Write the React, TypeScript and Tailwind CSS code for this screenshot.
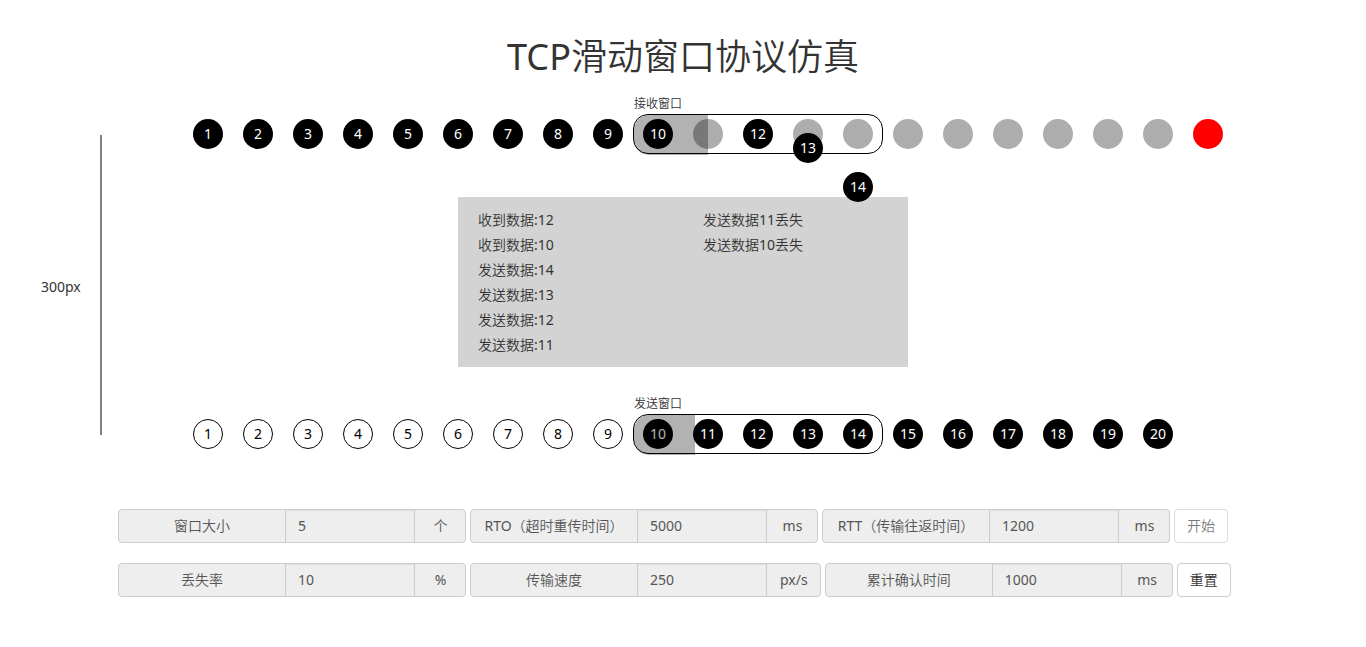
import { useId } from "react";

const CELL = 50;
const WINDOW_START = 9;
const WINDOW_SIZE = 5;

type CellState = "delivered" | "acked" | "waiting" | "end";

const cellStyles: Record<CellState, string> = {
  delivered: "bg-black text-white",
  acked: "border border-black bg-white text-black",
  waiting: "bg-[#adadad]",
  end: "bg-[#ff0000]",
};

interface Cell {
  label?: number;
  state: CellState;
  raised?: boolean;
}

const receiver: Cell[] = Array.from({ length: 21 }, (_, i) => {
  const n = i + 1;
  if (n === 21) return { state: "end" };
  if (n <= 10 || n === 12) return { label: n, state: "delivered", raised: true };
  return { state: "waiting" };
});

const sender: Cell[] = Array.from({ length: 20 }, (_, i) => ({
  label: i + 1,
  state: i + 1 < 10 ? "acked" : "delivered",
}));

const inFlight = [
  { label: 13, top: 19 },
  { label: 14, top: 58 },
];

const log = ["收到数据:12", "收到数据:10", "发送数据:14", "发送数据:13", "发送数据:12", "发送数据:11"];
const losses = ["发送数据11丢失", "发送数据10丢失"];

function Track({ title, cells, progress }: { title: string; cells: Cell[]; progress: number }) {
  return (
    <div className="relative flex h-10">
      {cells.map((cell, i) => (
        <div key={i} className="flex w-[50px] shrink-0 items-center justify-center">
          <span
            className={`flex size-[30px] items-center justify-center rounded-full ${cellStyles[cell.state]} ${
              cell.raised ? "relative z-10" : ""
            }`}
          >
            {cell.label}
          </span>
        </div>
      ))}
      <div
        className="absolute top-0 h-10 rounded-[15px] border border-black"
        style={{ left: WINDOW_START * CELL, width: WINDOW_SIZE * CELL }}
      >
        <span className="absolute bottom-full left-0 whitespace-nowrap text-xs leading-[22px]">{title}</span>
        <div className="absolute top-0 left-0 h-10 rounded-l-[15px] bg-black/30" style={{ width: progress }} />
      </div>
    </div>
  );
}

function Field({ label, value, unit }: { label: string; value: number; unit: string }) {
  const id = useId();
  return (
    <div className="flex h-[34px] overflow-hidden rounded border border-[#cccccc] bg-[#eeeeee] text-[#555555]">
      <label htmlFor={id} className="flex w-[166px] items-center justify-center whitespace-nowrap">
        {label}
      </label>
      <input
        id={id}
        type="text"
        defaultValue={value}
        disabled
        className="w-[130px] border-x border-[#cccccc] bg-[#eeeeee] px-3 shadow-[inset_0_1px_1px_rgba(0,0,0,0.075)]"
      />
      <span className="flex min-w-[50px] items-center justify-center pr-3 pl-[13px]">{unit}</span>
    </div>
  );
}

function Button({ children, disabled }: { children: string; disabled?: boolean }) {
  return (
    <button
      type="button"
      disabled={disabled}
      className="h-[34px] rounded border border-[#cccccc] bg-white px-3 text-[#333333] disabled:opacity-65"
    >
      {children}
    </button>
  );
}

export default function App() {
  return (
    <main className="bg-white pt-9 pb-12 font-['Noto_Sans','Noto_Sans_CJK_SC_DemiLight','Noto_Sans_CJK_SC',sans-serif] text-sm text-[#333333]">
      <h1 className="text-center text-4xl leading-[42px]">TCP滑动窗口协议仿真</h1>

      <section className="mt-9 grid grid-cols-[1fr_1000px_1fr]">
        <div className="mt-[21px] flex h-[300px] items-center gap-[19px] pl-[41px]">
          <span className="pt-[3px]">300px</span>
          <div className="h-full w-[2px] bg-[#808080]" />
        </div>

        <div className="relative">
          <Track title="接收窗口" cells={receiver} progress={74} />
          {inFlight.map((packet) => (
            <span
              key={packet.label}
              className="absolute z-20 flex size-[30px] items-center justify-center rounded-full bg-black text-white"
              style={{ left: (packet.label - 1) * CELL + 10, top: packet.top }}
            >
              {packet.label}
            </span>
          ))}
          <div className="mx-auto mt-[43px] mb-[47px] grid h-[170px] w-[450px] grid-cols-2 bg-[#d3d3d3] py-[10px] leading-[25px]">
            <ul className="pl-5">
              {log.map((line) => (
                <li key={line}>{line}</li>
              ))}
            </ul>
            <ul className="pl-5">
              {losses.map((line) => (
                <li key={line}>{line}</li>
              ))}
            </ul>
          </div>
          <Track title="发送窗口" cells={sender} progress={61} />
        </div>
      </section>

      <form className="mx-auto mt-[55px] flex w-[1130px] flex-col gap-5">
        <div className="flex gap-1">
          <Field label="窗口大小" value={5} unit="个" />
          <Field label="RTO（超时重传时间）" value={5000} unit="ms" />
          <Field label="RTT（传输往返时间）" value={1200} unit="ms" />
          <Button disabled>开始</Button>
        </div>
        <div className="flex gap-1">
          <Field label="丢失率" value={10} unit="%" />
          <Field label="传输速度" value={250} unit="px/s" />
          <Field label="累计确认时间" value={1000} unit="ms" />
          <Button>重置</Button>
        </div>
      </form>
    </main>
  );
}
